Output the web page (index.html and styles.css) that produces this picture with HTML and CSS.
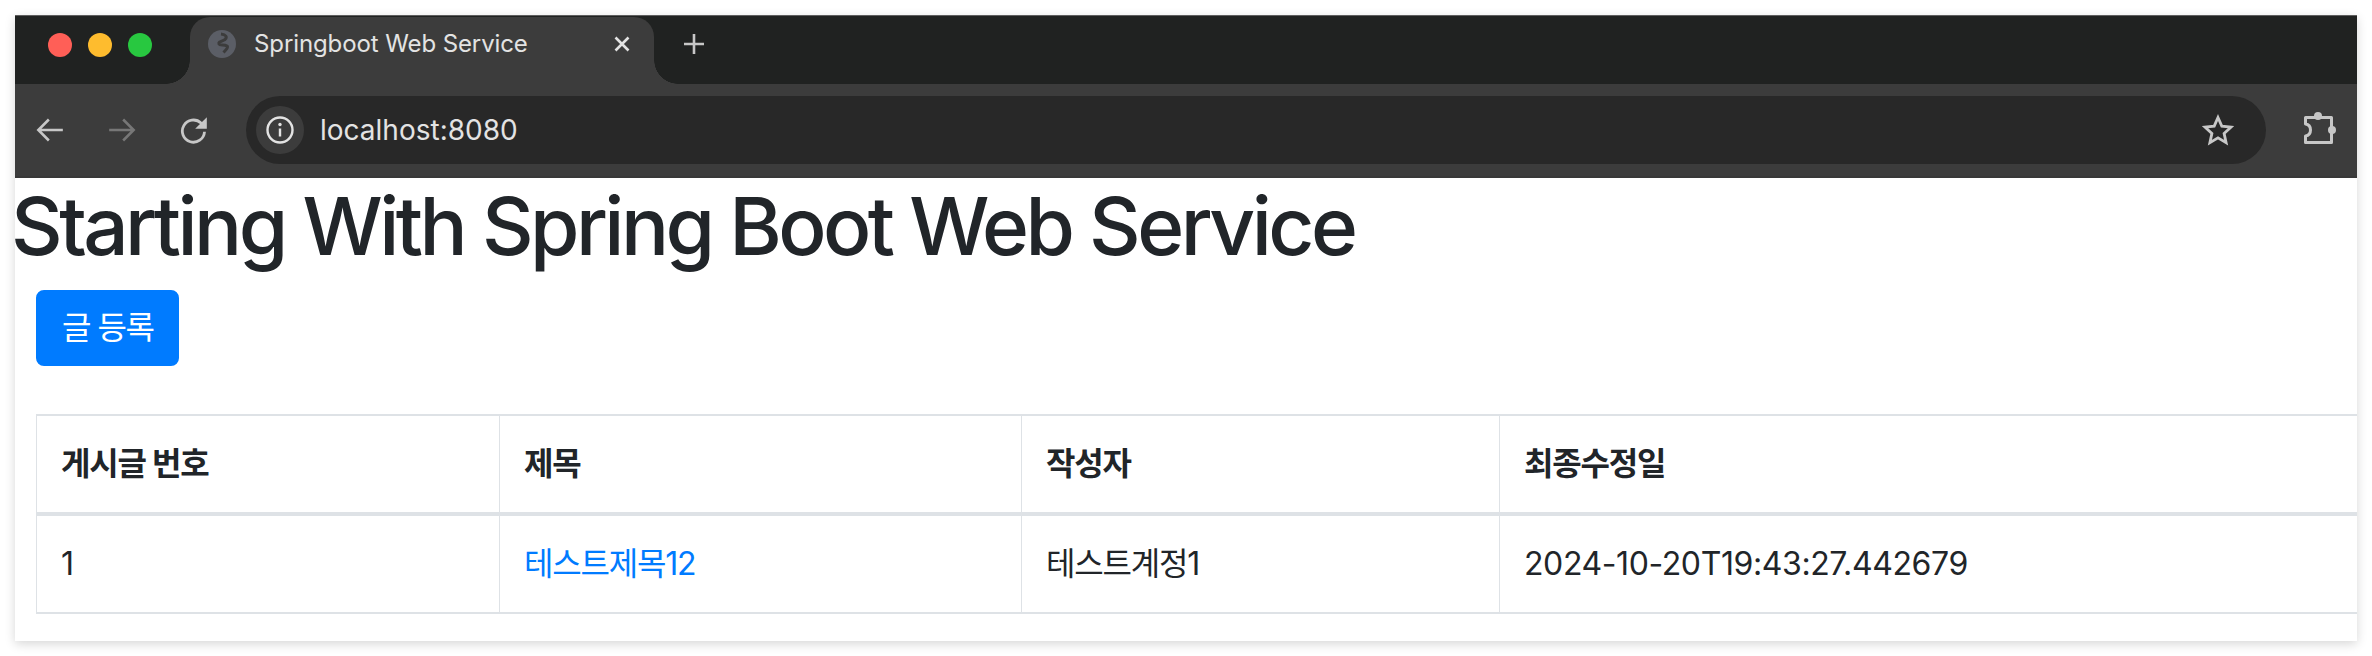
FILE: index.html
```html
<!DOCTYPE html>
<html lang="ko">
<head>
  <meta charset="UTF-8">
  <title>Springboot Web Service</title>
  <link rel="stylesheet" href="styles.css">
</head>
<body>
  <div class="window">
    <div class="tab-strip">
      <div class="lights">
        <span class="light red"></span>
        <span class="light yellow"></span>
        <span class="light green"></span>
      </div>
      <div class="tab">
        <svg class="favicon" viewBox="0 0 28 28">
          <circle cx="14" cy="14" r="14" fill="#5b5e66"/>
          <path d="M13 4c5 .5 6.500 3 4 5.500c-3 2-7 2-6 4.500c1 2 5 0 8 2c1.500 1-1 4-3.500 6.500" stroke="#3c3c3c" stroke-width="3" fill="none"/>
        </svg>
        <span class="tab-title">Springboot Web Service</span>
        <svg class="tab-close" viewBox="0 0 16 16"><path d="M1.500 1.500l13 13M14.500 1.500l-13 13" stroke="#e3e3e3" stroke-width="2.600" fill="none"/></svg>
      </div>
      <svg class="new-tab" viewBox="0 0 20 20"><path d="M10 0v20M0 10h20" stroke="#c7c7c7" stroke-width="2.600" fill="none"/></svg>
    </div>

    <div class="toolbar">
      <span class="nav-btn">
        <svg viewBox="0 0 24 24"><path d="M23 12H2M11 3l-9 9 9 9" stroke="#c7c7c7" stroke-width="2.200" fill="none"/></svg>
      </span>
      <span class="nav-btn">
        <svg viewBox="0 0 24 24"><path d="M1 12h21M13 3l9 9-9 9" stroke="#777" stroke-width="2.200" fill="none"/></svg>
      </span>
      <span class="nav-btn">
        <svg viewBox="0 0 24 24"><path d="M21 13.500a9.500 9.500 0 1 1-3-7.500L21 9" stroke="#c7c7c7" stroke-width="2.400" fill="none"/><path d="M23 1v10h-10z" fill="#c7c7c7"/></svg>
      </span>
      <div class="omnibox">
        <span class="site-chip">
          <svg viewBox="0 0 28 28"><circle cx="14" cy="14" r="12.500" stroke="#e3e3e3" stroke-width="2.400" fill="none"/><path d="M14 12.500v8" stroke="#e3e3e3" stroke-width="2.400"/><circle cx="14" cy="8.500" r="1.700" fill="#e3e3e3"/></svg>
        </span>
        <span class="url">localhost:8080</span>
        <svg class="star" viewBox="0 0 32 32"><path d="M16 3.500l3.800 8.600 9.300 1-7 6.300 2 9.200-8.100-4.700-8.100 4.700 2-9.200-7-6.300 9.300-1z" stroke="#c7c7c7" stroke-width="2.800" fill="none"/></svg>
      </div>
      <span class="nav-btn extensions">
        <svg viewBox="0 0 44 44">
          <path d="M9.500 9.500h26v25h-26v-6.500c3.500-.5 5-3 5-6s-1.500-5.500-5-6z" stroke="#c7c7c7" stroke-width="3" stroke-linejoin="round" fill="none"/>
          <circle cx="22" cy="8" r="4" fill="#c7c7c7"/>
          <circle cx="36" cy="22" r="4" fill="#c7c7c7"/>
        </svg>
      </span>
    </div>

    <main class="page">
      <h1 class="page-title">Starting With Spring Boot Web Service</h1>
      <div class="content">
        <a class="btn-primary" href="#">글 등록</a>
        <table class="board-table">
          <thead>
            <tr>
              <th class="col-no">게시글 번호</th>
              <th class="col-title">제목</th>
              <th class="col-author">작성자</th>
              <th class="col-date">최종수정일</th>
            </tr>
          </thead>
          <tbody>
            <tr>
              <td>1</td>
              <td><a href="#">테스트제목12</a></td>
              <td>테스트계정1</td>
              <td class="date-cell">2024-10-20T19:43:27.442679</td>
            </tr>
          </tbody>
        </table>
      </div>
    </main>
  </div>
</body>
</html>
```

FILE: styles.css
```css
* {
  box-sizing: border-box;
}
body {
  margin: 0;
  padding: 15px;
  background-color: #fff;
  font-family: Inter, "Noto Sans CJK KR", sans-serif;
  color: #212529;
}
.window {
  width: 2342px;
  height: 626px;
  background: #fff;
  box-shadow: 0 3px 10px rgba(0,0,0,0.16);
}

/* browser chrome */
.tab-strip {
  display: flex;
  align-items: flex-end;
  height: 69px;
  background-color: #202221;
  border-top: 1px solid #5e5e5e;
}
.lights {
  display: flex;
  gap: 16px;
  align-self: flex-start;
  width: 175px;
  padding: 17px 0 0 33px;
}
.light {
  width: 24px;
  height: 24px;
  border-radius: 50%;
}
.red { background-color: #ff5f57; }
.yellow { background-color: #febc2e; }
.green { background-color: #28c840; }
.tab {
  position: relative;
  display: flex;
  align-items: center;
  width: 464px;
  height: 67px;
  padding: 0 24px 14px 18px;
  background-color: #3c3c3c;
  border-radius: 20px 20px 0 0;
}
.tab::before,
.tab::after {
  content: "";
  position: absolute;
  bottom: 0;
  width: 24px;
  height: 24px;
}
.tab::before {
  left: -24px;
  background: radial-gradient(circle at 0 0, #202221 23.5px, #3c3c3c 24px);
}
.tab::after {
  right: -24px;
  background: radial-gradient(circle at 100% 0, #202221 23.5px, #3c3c3c 24px);
}
.favicon {
  width: 28px;
  height: 28px;
}
.tab-title {
  flex: 1;
  margin-left: 18px;
  font-size: 24px;
  letter-spacing: -0.1px;
  color: #e3e3e3;
  white-space: nowrap;
}
.tab-close {
  width: 16px;
  height: 16px;
}
.new-tab {
  width: 20px;
  height: 20px;
  margin: 0 0 30px 30px;
}
.toolbar {
  display: flex;
  align-items: center;
  height: 94px;
  padding-left: 11px;
  gap: 24px;
  background-color: #3c3c3c;
  border-bottom: 2px solid #383838;
}
.nav-btn {
  display: flex;
  align-items: center;
  justify-content: center;
  width: 48px;
  height: 48px;
}
.nav-btn svg {
  width: 28px;
  height: 28px;
}
.omnibox {
  display: flex;
  align-items: center;
  width: 2020px;
  height: 68px;
  margin-left: 4px;
  padding: 0 32px 0 10px;
  background-color: #282828;
  border-radius: 34px;
}
.site-chip {
  display: flex;
  align-items: center;
  justify-content: center;
  width: 48px;
  height: 48px;
  background-color: #3c3c3c;
  border-radius: 50%;
}
.site-chip svg {
  width: 28px;
  height: 28px;
}
.url {
  flex: 1;
  margin-left: 16px;
  font-size: 28px;
  color: #e3e3e3;
}
.star {
  width: 32px;
  height: 32px;
}
.extensions {
  margin-left: 4px;
}
.extensions svg {
  width: 44px;
  height: 44px;
}

/* page content */
.page-title {
  margin: 0 0 16px -4px;
  font-size: 80px;
  font-weight: 500;
  line-height: 96px;
  letter-spacing: -3.55px;
  white-space: nowrap;
}
.content {
  overflow: hidden;
  padding-left: 21px;
}
.btn-primary {
  display: inline-block;
  padding: 12px 24px;
  border: 2px solid #007bff;
  border-radius: 8px;
  background-color: #007bff;
  color: #fff;
  font-size: 32px;
  line-height: 48px;
  letter-spacing: -1.5px;
  text-decoration: none;
  vertical-align: top;
}
.board-table {
  width: 2400px;
  margin-top: 48px;
  table-layout: fixed;
  border-collapse: collapse;
  font-size: 32px;
  line-height: 48px;
  letter-spacing: -1.2px;
}
.board-table th,
.board-table td {
  padding: 24px;
  border-style: solid;
  border-color: #dee2e6;
  border-width: 2px 1.5px;
  text-align: left;
}
.board-table th {
  font-weight: 700;
  border-bottom-width: 4px;
}
.board-table a {
  color: #007bff;
  text-decoration: none;
}
.board-table .date-cell {
  letter-spacing: -0.4px;
}
.col-no { width: 463px; }
.col-title { width: 522px; }
.col-author { width: 478px; }
```
